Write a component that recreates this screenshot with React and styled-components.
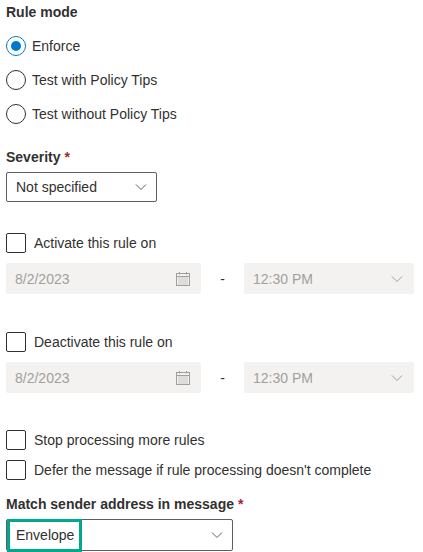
import React from 'react'
import styled, { createGlobalStyle } from 'styled-components'

const GlobalStyle = createGlobalStyle`
  * { margin: 0; padding: 0; box-sizing: border-box; }
  body {
    background: #fff;
    font-family: "Segoe UI", "Liberation Sans", Arial, sans-serif;
    font-size: 14px;
    color: #323130;
  }
`

const Page = styled.div`
  padding: 2px 6px 0 6px;
  width: 423px;
  height: 552px;
  overflow: hidden;
`

const Label = styled.div`
  font-weight: 600;
  font-size: 14px;
  line-height: 20px;
  height: 20px;
  color: #323130;
  margin-top: ${p => p.$mt || 0}px;
`

const Star = styled.span`
  color: #a4262c;
  margin-left: 4px;
`

const RadioGroup = styled.div`
  display: flex;
  flex-direction: column;
  gap: 14px;
  padding-top: 14px;
`

const RadioRow = styled.label`
  display: flex;
  align-items: center;
  gap: 6px;
  height: 20px;
`

const RadioCircle = styled.span`
  width: 20px;
  height: 20px;
  border-radius: 50%;
  border: 1px solid ${p => (p.$on ? '#0078d4' : '#323130')};
  display: flex;
  align-items: center;
  justify-content: center;
  &::after {
    content: '';
    display: ${p => (p.$on ? 'block' : 'none')};
    width: 10px;
    height: 10px;
    border-radius: 50%;
    background: #0078d4;
  }
`

const Select = styled.div`
  position: relative;
  width: ${p => p.$w}px;
  height: ${p => p.$h || 30}px;
  border: 1px solid #605e5c;
  border-radius: 2px;
  display: flex;
  align-items: center;
  justify-content: space-between;
  padding: 0 8px 0 9px;
  margin-top: 5px;
`

const Highlight = styled.div`
  position: absolute;
  left: 0;
  top: -1px;
  width: 75px;
  bottom: -2px;
  border: 3px solid #00a88f;
`

const CheckRow = styled.label`
  display: flex;
  align-items: center;
  gap: 8px;
  height: 20px;
  margin-top: ${p => p.$mt || 0}px;
`

const Box = styled.span`
  width: 20px;
  height: 20px;
  border: 1px solid #323130;
  border-radius: 2px;
  flex-shrink: 0;
`

const DateRow = styled.div`
  display: flex;
  align-items: center;
  margin-top: 10px;
`

const Disabled = styled.div`
  width: ${p => p.$w}px;
  height: 31px;
  background: #f3f2f1;
  border-radius: 2px;
  color: #a19f9d;
  display: flex;
  align-items: center;
  justify-content: space-between;
  padding: 0 10px 0 9px;
`

const Dash = styled.span`
  width: 43px;
  text-align: center;
  color: #323130;
`

const Chevron = ({ color = '#605e5c' }) => (
  <svg width="14" height="14" viewBox="0 0 14 14" fill="none">
    <path d="M2 4.5 L7 9.5 L12 4.5" stroke={color} strokeWidth="1" />
  </svg>
)

const Calendar = () => (
  <svg width="16" height="16" viewBox="0 0 16 16" fill="none" stroke="#a19f9d" strokeWidth="1">
    <rect x="1.5" y="2.5" width="13" height="12" />
    <line x1="1.5" y1="5.5" x2="14.5" y2="5.5" />
    <line x1="4.5" y1="1" x2="4.5" y2="3.5" />
    <line x1="11.5" y1="1" x2="11.5" y2="3.5" />
    <g fill="#a19f9d" stroke="none">
      {[4, 6, 8, 10, 12].map(x =>
        [7, 9, 11, 13].map(y => <rect key={x + '-' + y} x={x - 0.5} y={y - 0.5} width="1" height="1" />)
      )}
    </g>
  </svg>
)

const DateTime = () => (
  <DateRow>
    <Disabled $w={195}>
      <span>8/2/2023</span>
      <Calendar />
    </Disabled>
    <Dash>-</Dash>
    <Disabled $w={170}>
      <span>12:30 PM</span>
      <Chevron color="#a19f9d" />
    </Disabled>
  </DateRow>
)

export default function App() {
  return (
    <>
      <GlobalStyle />
      <Page>
        <Label>Rule mode</Label>
        <RadioGroup>
          <RadioRow><RadioCircle $on /> Enforce</RadioRow>
          <RadioRow><RadioCircle /> Test with Policy Tips</RadioRow>
          <RadioRow><RadioCircle /> Test without Policy Tips</RadioRow>
        </RadioGroup>

        <Label $mt={23}>Severity<Star>*</Star></Label>
        <Select $w={151}>
          <span>Not specified</span>
          <Chevron />
        </Select>

        <CheckRow $mt={31}><Box />Activate this rule on</CheckRow>
        <DateTime />

        <CheckRow $mt={38}><Box />Deactivate this rule on</CheckRow>
        <DateTime />

        <CheckRow $mt={37}><Box />Stop processing more rules</CheckRow>
        <CheckRow $mt={10}><Box />Defer the message if rule processing doesn't complete</CheckRow>

        <Label $mt={14}>Match sender address in message<Star>*</Star></Label>
        <Select $w={227} $h={32}>
          <Highlight />
          <span>Envelope</span>
          <Chevron />
        </Select>
      </Page>
    </>
  )
}
